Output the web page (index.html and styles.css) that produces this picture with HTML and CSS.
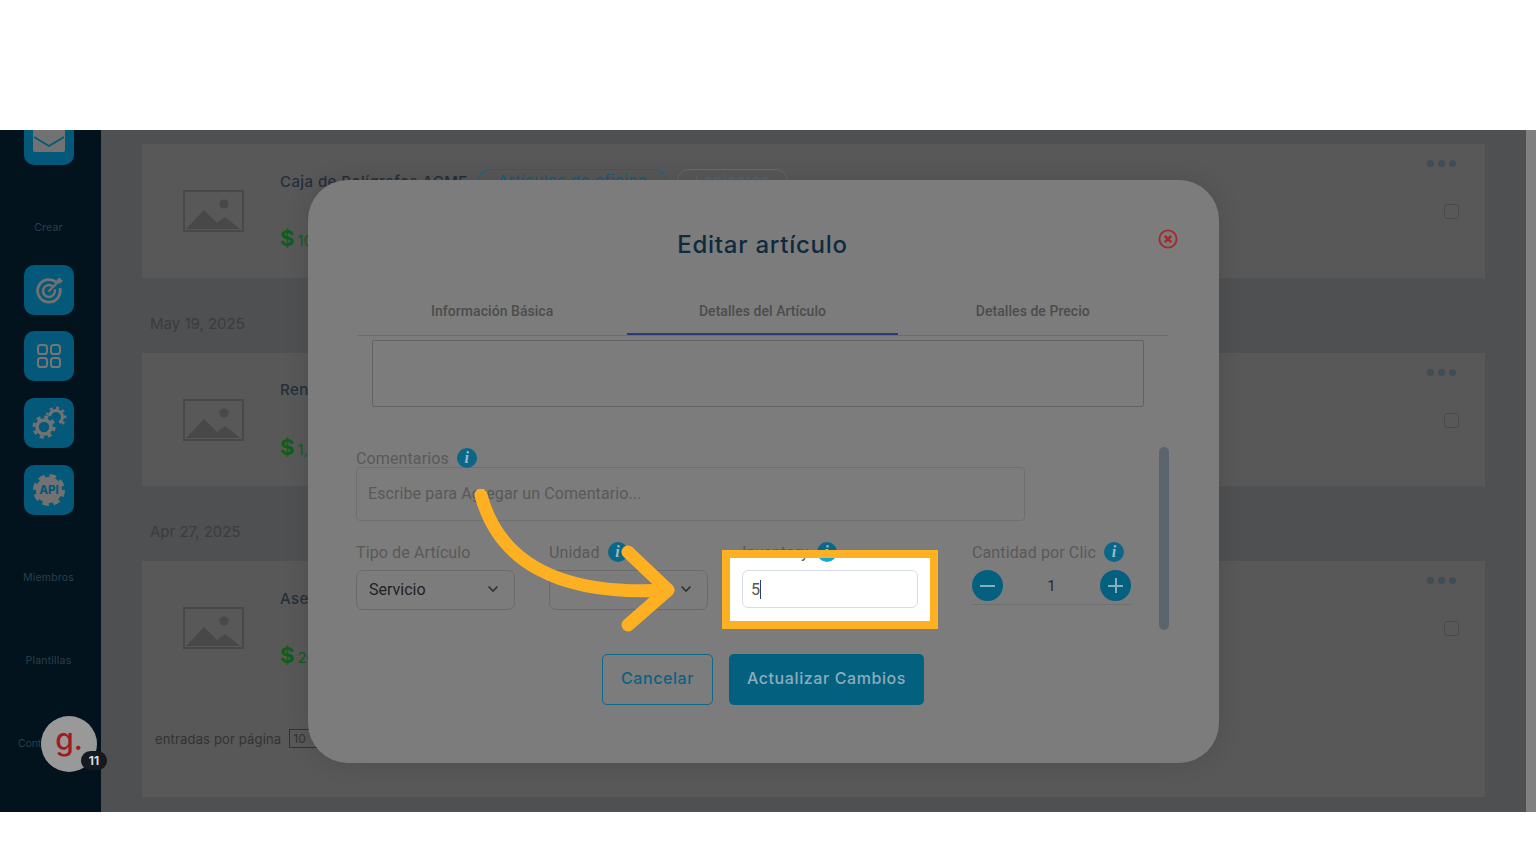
FILE: index.html
```html
<!DOCTYPE html>
<html lang="es">
<head>
    <meta charset="UTF-8">
    <meta name="viewport" content="width=device-width, initial-scale=1.0">
    <title>Editar artículo</title>
    <link rel="stylesheet" href="styles.css">
</head>
<body>

    <div class="frame">
        <!-- Sidebar -->
        <aside class="sidebar">
            <div class="side-btn side-btn-top">
                <svg class="side-icon" viewBox="0 0 32 26"><rect x="0" y="0" width="32" height="26" rx="2" fill="#727272"/><path d="M1 11 L16 20 L31 11" fill="none" stroke="#04597a" stroke-width="1.8"/></svg>
            </div>
            <p class="side-label side-label-crear">Crear</p>
            <div class="side-btn side-btn-first">
                <svg class="side-icon" viewBox="0 0 28 28" fill="none" stroke="#727272" stroke-width="2.8"><path d="M21.3 6.3 A11.3 11.3 0 1 0 24.9 12.1"/><path d="M17.9 10.4 A6 6 0 1 0 19.8 13.4" stroke-width="2.4"/><path d="M13.5 15.5 L23 6" stroke-width="2.2"/><path d="M21.5 4 L25 1.5 L26 3.5 L28 4.5 L25 7.5 L21.5 7 Z" fill="#727272" stroke="none"/></svg>
            </div>
            <div class="side-btn">
                <svg class="side-icon side-icon-grid" viewBox="0 0 24 24" fill="none" stroke="#757575" stroke-width="2"><rect x="1" y="1" width="9" height="9" rx="2.6"/><rect x="14" y="1" width="9" height="9" rx="2.6"/><rect x="1" y="14" width="9" height="9" rx="2.6"/><rect x="14" y="14" width="9" height="9" rx="2.6"/></svg>
            </div>
            <div class="side-btn">
                <svg class="side-icon side-icon-big" viewBox="0 0 36 36" fill="none" stroke="#727272"><circle cx="13" cy="22" r="7" stroke-width="3.6"/><circle cx="13" cy="22" r="10" stroke-width="3.2" stroke-dasharray="4 3.85"/><path d="M18.6 10.9 A6.5 6.5 0 1 1 28.25 17.6" stroke-width="3"/><path d="M16.1 10.4 A9.1 9.1 0 1 1 29.5 19.9" stroke-width="2.6" stroke-dasharray="2.8 3.5"/></svg>
            </div>
            <div class="side-btn">
                <svg class="side-icon side-icon-big" viewBox="0 0 36 36"><circle cx="18" cy="18" r="13" fill="#727272"/><circle cx="18" cy="18" r="14" fill="none" stroke="#727272" stroke-width="4" stroke-dasharray="6.5 4.5"/><text x="18" y="22.2" class="api-text" text-anchor="middle">API</text></svg>
            </div>
            <p class="side-label side-label-miembros">Miembros</p>
            <p class="side-label side-label-plantillas">Plantillas</p>
            <p class="side-label side-label-con">Contabilidad</p>
        </aside>

        <!-- Article list -->
        <main class="list">
            <section class="card">
                <svg class="thumb" viewBox="0 0 61 42"><rect x="1" y="1" width="59" height="40" fill="none" stroke="#484848" stroke-width="2"/><circle cx="41" cy="14" r="4.5" fill="#484848"/><path d="M3 39 L21 20 L34 33 L42 27 L57 39 Z" fill="#484848"/></svg>
                <div class="card-info">
                    <div class="card-head">
                        <span class="card-title">Caja de Bolígrafos ACME</span>
                        <span class="chip">Artículos de oficina</span>
                        <span class="chip chip-muted">Lapiceros</span>
                    </div>
                    <p class="price"><span class="dollar">$</span>10.00</p>
                </div>
                <div class="card-side"><div class="dots"><i></i><i></i><i></i></div><div class="check"></div></div>
            </section>
            <p class="date">May 19, 2025</p>
            <section class="card">
                <svg class="thumb" viewBox="0 0 61 42"><rect x="1" y="1" width="59" height="40" fill="none" stroke="#484848" stroke-width="2"/><circle cx="41" cy="14" r="4.5" fill="#484848"/><path d="M3 39 L21 20 L34 33 L42 27 L57 39 Z" fill="#484848"/></svg>
                <div class="card-info">
                    <div class="card-head"><span class="card-title">Renta</span></div>
                    <p class="price"><span class="dollar">$</span>1,200.00</p>
                </div>
                <div class="card-side"><div class="dots"><i></i><i></i><i></i></div><div class="check"></div></div>
            </section>
            <p class="date">Apr 27, 2025</p>
            <section class="card">
                <svg class="thumb" viewBox="0 0 61 42"><rect x="1" y="1" width="59" height="40" fill="none" stroke="#484848" stroke-width="2"/><circle cx="41" cy="14" r="4.5" fill="#484848"/><path d="M3 39 L21 20 L34 33 L42 27 L57 39 Z" fill="#484848"/></svg>
                <div class="card-info">
                    <div class="card-head"><span class="card-title">Asesoría</span></div>
                    <p class="price"><span class="dollar">$</span>200.00</p>
                </div>
                <div class="card-side"><div class="dots"><i></i><i></i><i></i></div><div class="check"></div></div>
            </section>
            <footer class="pager">
                <span>entradas por página</span>
                <span class="pager-select">10</span>
            </footer>
        </main>

        <div class="page-scroll"></div>

        <!-- Edit modal -->
        <div class="modal">
            <h2 class="modal-title">Editar artículo</h2>
            <svg class="close" viewBox="0 0 20 20" fill="none" stroke="#a5272b"><circle cx="10" cy="10" r="8.6" stroke-width="1.8"/><path d="M6.8 6.8 L13.2 13.2 M13.2 6.8 L6.8 13.2" stroke-width="2.4"/></svg>

            <div class="tabs">
                <div class="tab">Información Básica</div>
                <div class="tab tab-active">Detalles del Artículo</div>
                <div class="tab">Detalles de Precio</div>
            </div>

            <div class="modal-body">
                <div class="old-box"></div>

                <div class="label-row"><span>Comentarios</span><span class="info">i</span></div>
                <div class="comment-input">Escribe para Agregar un Comentario...</div>

                <div class="fields">
                    <div class="field">
                        <div class="label-row"><span>Tipo de Artículo</span></div>
                        <div class="select">Servicio
                            <svg class="chev" viewBox="0 0 12 8" fill="none" stroke="#303030" stroke-width="1.6"><path d="M1.5 1.5 L6 6 L10.5 1.5"/></svg>
                        </div>
                    </div>
                    <div class="field">
                        <div class="label-row"><span>Unidad</span><span class="info">i</span></div>
                        <div class="select">
                            <svg class="chev" viewBox="0 0 12 8" fill="none" stroke="#303030" stroke-width="1.6"><path d="M1.5 1.5 L6 6 L10.5 1.5"/></svg>
                        </div>
                    </div>
                    <div class="field field-inventory">
                        <div class="spot-bg"></div>
                        <div class="label-row"><span>Inventory</span><span class="info info-spot">i</span></div>
                        <div class="text-input">5<span class="caret"></span></div>
                        <div class="spot-frame"></div>
                    </div>
                    <div class="field field-qty">
                        <div class="label-row"><span>Cantidad por Clic</span><span class="info">i</span></div>
                        <div class="stepper">
                            <span class="step-btn"><i class="bar"></i></span>
                            <span class="step-val">1</span>
                            <span class="step-btn"><i class="bar"></i><i class="bar bar-v"></i></span>
                        </div>
                    </div>
                </div>

                <div class="actions">
                    <button class="btn btn-outline">Cancelar</button>
                    <button class="btn btn-fill">Actualizar Cambios</button>
                </div>
            </div>
            <div class="modal-scroll"></div>
        </div>

        <!-- Avatar over the sidebar -->
        <div class="avatar">g.<span class="avatar-badge">11</span></div>

        <!-- Tutorial arrow -->
        <svg class="arrow" viewBox="0 0 220 160" fill="none" stroke="#fdb022" stroke-width="13" stroke-linecap="round" stroke-linejoin="round">
            <path d="M11 6 C28 70 85 108 198 101"/>
            <path d="M158 63 L198 101 L158 136"/>
        </svg>
    </div>

</body>
</html>
```

FILE: styles.css
```css
* {
    margin: 0;
    padding: 0;
    box-sizing: border-box;
}

body {
    background: #fff;
    font-family: 'Roboto', sans-serif;
    overflow: hidden;
}

.frame {
    position: relative;
    display: flex;
    margin-top: 130px;
    height: 682px;
    overflow: hidden;
    background: #4e5052;
}

/* Sidebar */
.sidebar {
    width: 101px;
    flex-shrink: 0;
    padding-right: 4px;
    background: #02131d;
    display: flex;
    flex-direction: column;
    align-items: center;
}

.side-btn {
    width: 50px;
    height: 50px;
    background: #04597a;
    border-radius: 10px;
    display: flex;
    align-items: center;
    justify-content: center;
    margin-bottom: 17px;
    flex-shrink: 0;
}

.side-btn-top {
    height: 35px;
    border-radius: 0 0 10px 10px;
    margin-bottom: 0;
    align-items: flex-end;
    padding-bottom: 13px;
    overflow: hidden;
}

.side-btn-first {
    margin-bottom: 16px;
}

.side-icon {
    width: 28px;
    height: 28px;
    flex-shrink: 0;
}

.side-btn-top .side-icon {
    width: 32px;
    height: 26px;
}

.side-icon-grid {
    width: 24px;
    height: 24px;
}

.side-icon-big {
    width: 36px;
    height: 36px;
}

.api-text {
    font-family: 'Inter', sans-serif;
    font-size: 11.5px;
    font-weight: 800;
    fill: #04597a;
}

.side-label {
    font-family: 'Inter', sans-serif;
    font-size: 10.5px;
    letter-spacing: 0.2px;
    color: #2a3f4c;
    line-height: 14px;
    white-space: nowrap;
}

.side-label-crear {
    margin-top: 56px;
    margin-bottom: 30px;
}

.side-label-miembros {
    margin-top: 39px;
}

.side-label-plantillas {
    margin-top: 69px;
}

.side-label-con {
    margin-top: 69px;
    letter-spacing: -0.1px;
}

/* Article list */
.list {
    flex: 1;
    padding: 14px 41px 0;
    min-width: 0;
}

.card {
    display: flex;
    height: 133.5px;
    background: #585858;
    padding: 0 26px 0 41px;
    align-items: flex-start;
}

.thumb {
    width: 61px;
    height: 42px;
    margin-top: 46px;
    flex-shrink: 0;
}

.card-info {
    flex: 1;
    margin-left: 36px;
    padding-top: 25px;
    min-width: 0;
}

.card-head {
    display: flex;
    align-items: center;
    gap: 10px;
    height: 24px;
}

.card-title {
    font-family: 'Inter', sans-serif;
    font-size: 15px;
    font-weight: 500;
    letter-spacing: 0.42px;
    color: #252f3a;
}

.chip {
    height: 24px;
    padding: 0 19px;
    border: 1px solid #0b6a8a;
    border-radius: 12px;
    font-family: 'Inter', sans-serif;
    font-size: 15px;
    letter-spacing: 0.62px;
    color: #0a6080;
    line-height: 22px;
    white-space: nowrap;
}

.chip-muted {
    padding: 0 17px;
    border-color: #55707c;
    color: #4f6874;
}

.price {
    margin-top: 33px;
    font-family: 'Inter', sans-serif;
    font-size: 15px;
    color: #0d5f1b;
    line-height: 24px;
    white-space: nowrap;
}

.dollar {
    margin-right: 3px;
    font-size: 22px;
    font-weight: 700;
}

.card-side {
    width: 33px;
    padding-top: 16px;
    display: flex;
    flex-direction: column;
    align-items: flex-end;
}

.dots {
    display: flex;
    gap: 4px;
    margin-right: 3px;
}

.dots i {
    width: 7px;
    height: 7px;
    background: #3f4d57;
    border-radius: 50%;
}

.check {
    width: 15px;
    height: 15px;
    margin-top: 37px;
    border: 1px solid #4a4a4a;
    border-radius: 3px;
}

.date {
    height: 75px;
    padding: 35px 8px 0;
    font-family: 'Inter', sans-serif;
    font-size: 15px;
    line-height: 22px;
    color: #3a3c3e;
}

.pager {
    display: flex;
    align-items: center;
    gap: 8px;
    height: 102px;
    padding: 0 0 14px 13px;
    background: #585858;
    font-family: 'Inter', sans-serif;
    font-size: 13px;
    letter-spacing: 0.16px;
    color: #333;
}

.pager-select {
    width: 40px;
    height: 19px;
    padding-left: 3px;
    border: 1px solid #333;
    font-size: 12px;
    line-height: 17px;
}

.page-scroll {
    width: 10px;
    flex-shrink: 0;
    background: #808080;
}

/* Edit modal */
.modal {
    position: absolute;
    top: 50px;
    left: 308px;
    width: 911px;
    height: 583px;
    padding: 0 51px 0 49px;
    background: #7c7c7c;
    border-radius: 40px;
    box-shadow: 0 0 24px rgba(0, 0, 0, 0.12);
}

.modal-title {
    padding-top: 48px;
    font-family: 'Inter', sans-serif;
    font-size: 24px;
    font-weight: 500;
    letter-spacing: 0.75px;
    line-height: 34px;
    text-align: center;
    color: #0e2b3e;
}

.close {
    position: absolute;
    top: 49px;
    right: 41px;
    width: 20px;
    height: 20px;
}

.tabs {
    display: flex;
    margin-top: 26px;
    border-bottom: 1px solid #6c6c6c;
}

.tab {
    flex: 1;
    height: 47px;
    padding-top: 14px;
    text-align: center;
    font-size: 14px;
    font-weight: 500;
    letter-spacing: 0.05px;
    line-height: 18px;
    color: #4c4c4c;
}

.tab-active {
    border-bottom: 2px solid #2a3a7a;
}

.modal-body {
    margin-left: -1px;
}

.old-box {
    width: 772px;
    height: 67px;
    margin: 4px 0 41px 16px;
    border: 1.5px solid #626262;
    border-radius: 2px;
}

.label-row {
    display: flex;
    align-items: center;
    gap: 8px;
    height: 20px;
    font-size: 16px;
    letter-spacing: 0.12px;
    color: #595959;
    white-space: nowrap;
}

.info {
    width: 20px;
    height: 20px;
    border-radius: 50%;
    background: #0a6788;
    color: #9db9c6;
    font-family: 'Liberation Serif', serif;
    font-size: 16px;
    font-weight: 700;
    font-style: italic;
    line-height: 20px;
    text-align: center;
}

.info-spot {
    background: linear-gradient(#0a6788 0 16px, #12a7dc 16px);
}

.comment-input {
    width: 669px;
    height: 54px;
    margin-top: -1px;
    padding: 16px 11px;
    border: 1px solid #6f6f6f;
    border-radius: 4px;
    font-size: 16px;
    letter-spacing: 0.1px;
    line-height: 20px;
    color: #595959;
}

.fields {
    display: flex;
    margin-top: 21px;
    height: 68px;
}

.field {
    width: 159px;
    margin-right: 34px;
}

.field .label-row {
    margin-bottom: 8px;
}

.select {
    display: flex;
    align-items: center;
    justify-content: space-between;
    height: 40px;
    padding: 0 15px 2px 12px;
    border: 1px solid #6a6a6a;
    border-radius: 7px;
    font-size: 16px;
    color: #222;
}

.select .chev:only-child {
    margin-left: auto;
}

.chev {
    width: 12px;
    height: 8px;
}

.field-inventory {
    position: relative;
    width: 176px;
    margin-right: 54px;
}

.field-inventory .label-row {
    position: relative;
}

/* the white cut-out sits under the label, the orange frame over it */
.spot-bg {
    position: absolute;
    top: 16px;
    left: -12px;
    width: 200px;
    height: 63px;
    background: #fff;
}

.spot-frame {
    position: absolute;
    top: 8px;
    left: -20px;
    width: 216px;
    height: 79px;
    border: 8px solid #fdb022;
}

.text-input {
    position: relative;
    display: flex;
    align-items: center;
    height: 38px;
    padding-left: 8px;
    background: #fff;
    border: 1.5px solid #d6dcea;
    border-radius: 6px;
    font-size: 16px;
    color: #555;
}

.caret {
    width: 1px;
    height: 19px;
    background: #2a3a7a;
}

.stepper {
    display: flex;
    align-items: center;
    justify-content: space-between;
    height: 38px;
    margin-top: -3px;
    border-bottom: 1px solid #707070;
    font-size: 15px;
    color: #2a2a2a;
}

.step-btn {
    position: relative;
    width: 31px;
    height: 31px;
    background: #04607f;
    border-radius: 50%;
}

.bar {
    position: absolute;
    top: 14.5px;
    left: 8px;
    width: 15px;
    height: 2px;
    background: #8aadbc;
}

.bar-v {
    top: 8px;
    left: 14.5px;
    width: 2px;
    height: 15px;
}

.actions {
    display: flex;
    justify-content: center;
    gap: 16px;
    margin-top: 44px;
    padding-left: 2px;
}

.btn {
    height: 51px;
    padding-bottom: 3px;
    border-radius: 5px;
    font-family: 'Inter', sans-serif;
    font-size: 16px;
    font-weight: 500;
    letter-spacing: 0.6px;
}

.btn-outline {
    width: 111px;
    background: transparent;
    border: 1.5px solid #0b6a8a;
    color: #0a6382;
}

.btn-fill {
    width: 195px;
    background: #04607f;
    border: none;
    color: #8aadbc;
}

.modal-scroll {
    position: absolute;
    top: 267px;
    right: 50px;
    width: 10px;
    height: 183px;
    background: #5c656d;
    border-radius: 5px;
}

/* Avatar */
.avatar {
    position: absolute;
    top: 586px;
    left: 41px;
    width: 56px;
    height: 56px;
    background: #999;
    border-radius: 50%;
    font-family: 'Inter', sans-serif;
    font-size: 30px;
    font-weight: 500;
    line-height: 46px;
    text-align: center;
    color: #a01b20;
}

.avatar-badge {
    position: absolute;
    top: 35px;
    left: 40px;
    width: 26px;
    height: 19px;
    background: #141a1f;
    border-radius: 10px;
    font-size: 12px;
    font-weight: 700;
    line-height: 19px;
    color: #ddd;
}

/* Tutorial arrow */
.arrow {
    position: absolute;
    top: 359px;
    left: 470px;
    width: 220px;
    height: 160px;
}
```
